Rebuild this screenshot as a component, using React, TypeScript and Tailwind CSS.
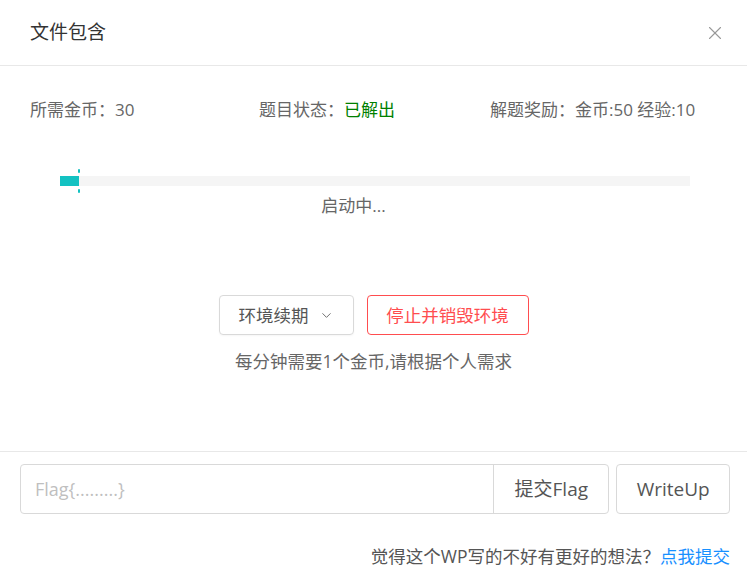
import { X, ChevronDown } from "lucide-react";

export default function App() {
  return (
    <div
      className="w-[747px] h-[576px] bg-white flex flex-col text-[#666] overflow-hidden"
      style={{ fontFamily: '"Open Sans", "Noto Sans CJK SC", sans-serif' }}
    >
      {/* Header */}
      <div className="h-[66px] shrink-0 flex items-center justify-between pl-[30px] pr-[21px] border-b border-[#e8e8e8]">
        <span className="text-[19px] text-[#333]">文件包含</span>
        <X className="w-[22px] h-[22px] text-[#999]" strokeWidth={1.2} />
      </div>

      {/* Body */}
      <div className="flex-1 flex flex-col border-b border-[#e8e8e8]">
        <div className="flex items-center h-[22px] mt-[33px] px-[30px] text-[17px] text-[#666]">
          <span className="w-[229px]">所需金币：30</span>
          <span className="w-[231px]">
            题目状态：<span className="text-[#008000]">已解出</span>
          </span>
          <span>解题奖励：金币:50 经验:10</span>
        </div>

        {/* Progress */}
        <div className="mt-[55px] ml-[60px] mr-[57px] relative h-[10px] bg-[#f5f5f5]">
          <div className="h-full w-[19px] bg-[#13c2c2]" />
          <div className="absolute left-[18px] top-[-7px] w-[2px] h-[4px] rounded-full bg-[#13c2c2]" />
          <div className="absolute left-[18px] top-[13px] w-[2px] h-[4px] rounded-full bg-[#13c2c2]" />
        </div>
        <div className="mt-[8px] text-center pr-[40px] text-[17px] text-[#666] leading-[24px]">启动中...</div>

        {/* Actions */}
        <div className="mt-[77px] flex justify-center gap-[13px]">
          <button className="w-[135px] h-[40px] border border-[#d9d9d9] rounded-[4px] flex items-center justify-center gap-[10px] text-[17.5px] text-[#555] shadow-[0_1px_2px_rgba(0,0,0,0.04)]">
            环境续期
            <ChevronDown className="w-[15px] h-[15px] text-[#666]" strokeWidth={1.5} />
          </button>
          <button className="w-[162px] h-[40px] border border-[#ff4d4f] rounded-[4px] flex items-center justify-center text-[17.5px] text-[#ff4d4f]">
            停止并销毁环境
          </button>
        </div>
        <div className="mt-[14px] text-center text-[17.5px] text-[#666] leading-[24px]">
          每分钟需要1个金币,请根据个人需求
        </div>
      </div>

      {/* Footer */}
      <div className="h-[124px] shrink-0 flex flex-col px-[17px] pt-[12px]">
        <div className="flex gap-[7px] pl-[3px]">
          <div className="flex h-[50px] w-[591px] border border-[#d9d9d9] rounded-[4px] overflow-hidden">
            <div className="flex-1 flex items-center px-[14px] text-[18px] text-[#bfbfbf]">Flag{"{.........}"}</div>
            <button className="w-[115px] border-l border-[#d9d9d9] text-[19px] text-[#555]">提交Flag</button>
          </div>
          <button className="w-[114px] h-[50px] border border-[#d9d9d9] rounded-[4px] text-[19px] text-[#555]">
            WriteUp
          </button>
        </div>
        <div className="mt-[29px] text-right text-[17.5px] text-[#555]">
          觉得这个WP写的不好有更好的想法？<span className="text-[#1890ff]">点我提交</span>
        </div>
      </div>
    </div>
  );
}
